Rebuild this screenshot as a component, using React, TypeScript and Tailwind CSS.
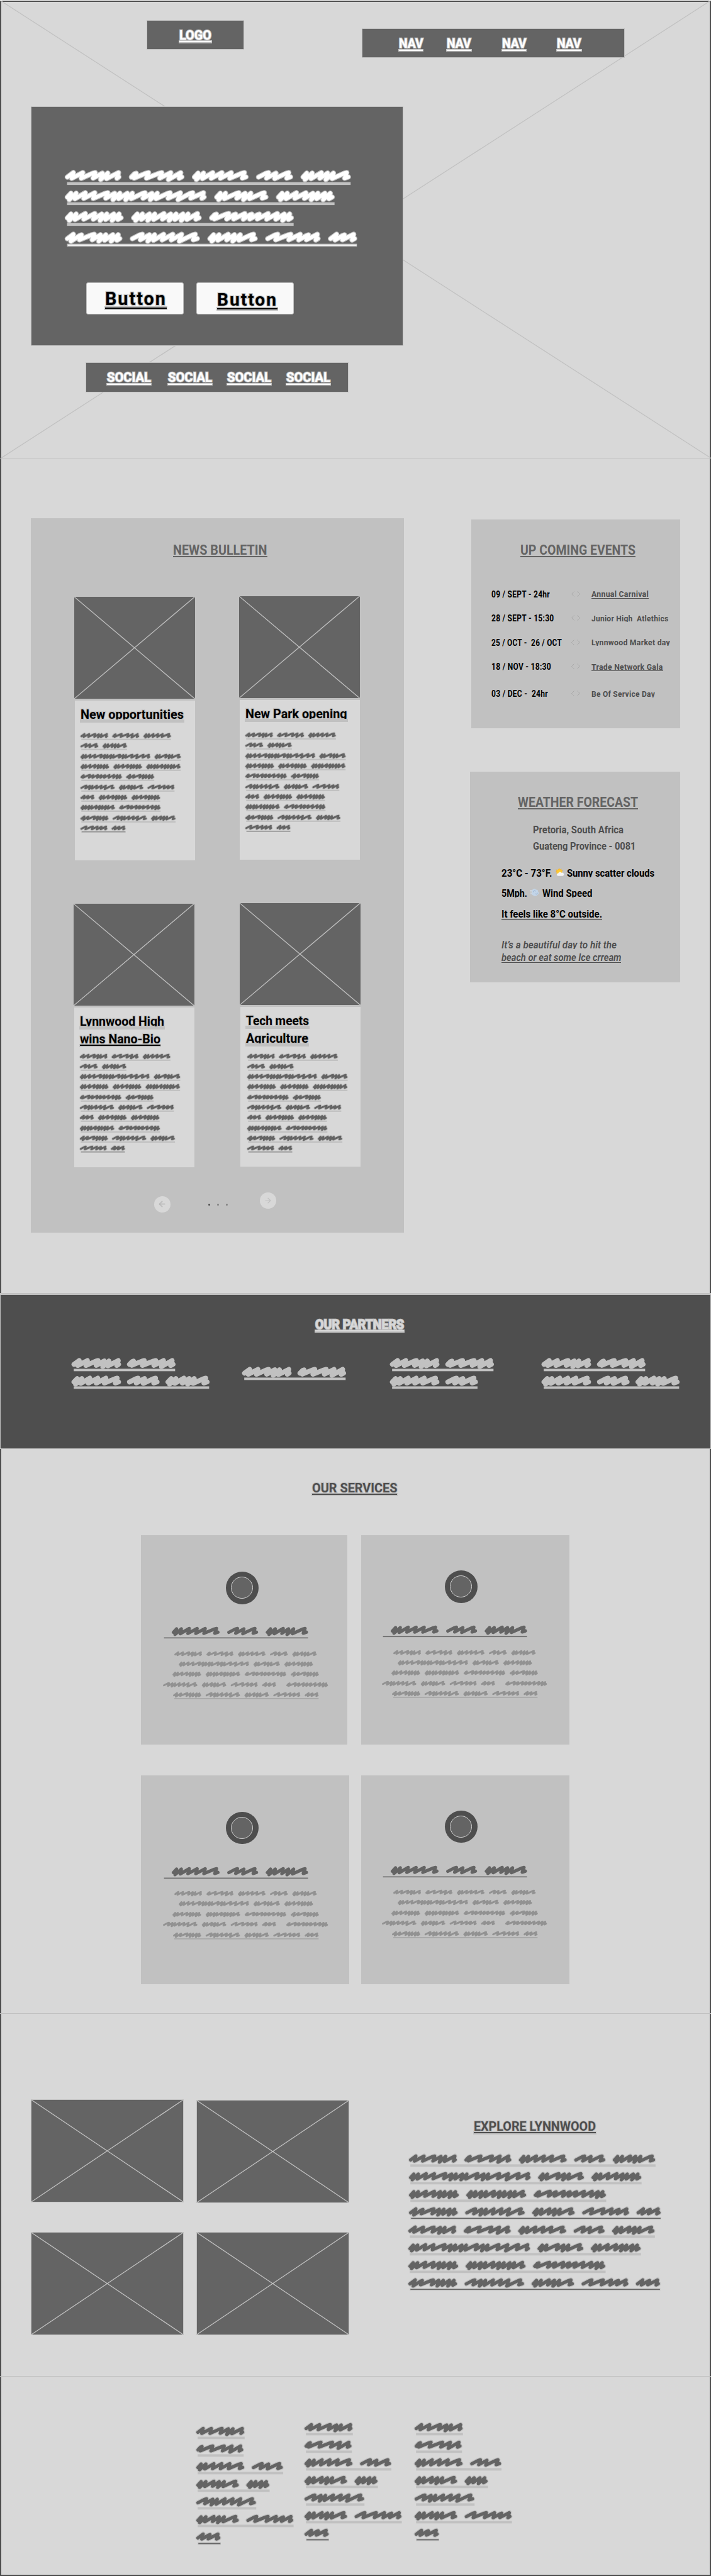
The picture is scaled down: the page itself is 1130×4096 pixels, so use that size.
import { useLayoutEffect, useRef } from "react";
import type { ReactNode } from "react";

/* ---------- scribbled placeholder text ---------- */

type Peak = [kind: "t" | "T" | "s" | "d" | "n" | "c", x: number];
type Word = { w: number; peaks: Peak[] };

const WORDS: Record<string, Word> = {
  a: { w: 350, peaks: [["t", 50], ["t", 110], ["s", 190], ["d", 234], ["n", 268], ["t", 336]] },
  b: { w: 343, peaks: [["c", 42], ["s", 122], ["s", 206], ["T", 261], ["t", 324]] },
  c: { w: 350, peaks: [["d", 35], ["n", 70], ["t", 128], ["t", 186], ["t", 245], ["s", 330]] },
  d: { w: 226, peaks: [["s", 77], ["n", 122], ["s", 205]] },
  e: { w: 310, peaks: [["d", 35], ["n", 70], ["t", 128], ["d", 167], ["n", 204], ["s", 290]] },
  f: {
    w: 890,
    peaks: [
      ["d", 35], ["n", 68], ["t", 126], ["t", 186], ["s", 270], ["d", 312], ["n", 345], ["d", 392],
      ["n", 424], ["s", 506], ["d", 548], ["n", 582], ["s", 665], ["T", 728], ["s", 808], ["t", 874],
    ],
  },
  g: { w: 335, peaks: [["d", 35], ["n", 68], ["s", 154], ["d", 192], ["n", 228], ["s", 315]] },
  h: { w: 364, peaks: [["d", 35], ["n", 68], ["t", 126], ["t", 186], ["d", 230], ["n", 262], ["d", 306], ["n", 340]] },
  i: {
    w: 438,
    peaks: [
      ["d", 35], ["n", 68], ["d", 112], ["n", 146], ["t", 204], ["d", 247], ["n", 281], ["d", 324], ["n", 357], ["t", 416],
    ],
  },
  j: {
    w: 528,
    peaks: [
      ["c", 42], ["s", 122], ["c", 164], ["t", 222], ["c", 266], ["c", 314], ["t", 370], ["t", 428], ["d", 472], ["n", 506],
    ],
  },
  k: { w: 356, peaks: [["T", 50], ["c", 102], ["s", 184], ["d", 222], ["n", 256], ["d", 300], ["n", 334]] },
  l: { w: 435, peaks: [["s", 77], ["d", 120], ["n", 153], ["t", 210], ["t", 268], ["T", 324], ["s", 412]] },
  m: { w: 342, peaks: [["s", 77], ["s", 160], ["t", 218], ["c", 270], ["t", 326]] },
  n: { w: 176, peaks: [["t", 50], ["c", 100], ["t", 158]] },
  o: { w: 167, peaks: [["d", 35], ["n", 69], ["d", 111], ["n", 146]] },
  _: { w: 18, peaks: [] },
};

function wordPath({ w, peaks }: Word, x: number) {
  if (!peaks.length) return "";
  let d = `M${x + 12} 2`;
  for (const [kind, p] of peaks) {
    const q = x + p;
    if (kind === "t") d += `L${q} -26L${q - 10} 10`;
    if (kind === "T") d += `L${q} -26L${q - 15} 18`;
    if (kind === "s") d += `L${q - 18} -22L${q - 2} -26L${q - 15} 9`;
    if (kind === "d") d += `L${q} -23L${q - 11} 18`;
    if (kind === "n") d += `L${q} -23L${q - 8} 12`;
    if (kind === "c") d += `L${q - 10} -19L${q} -22L${q - 13} 9`;
  }
  return d + `L${x + w - 12} 1`;
}

type ScribbleProps = {
  lines: string[];
  /** pixels per drawing unit; one line is 129 units high */
  scale: number;
  color: string;
  outline?: number;
  bands?: boolean;
  rule?: number;
  ruleStart?: number;
  className?: string;
};

function Scribble({ lines, scale, color, outline = 0, bands = true, rule = 5, ruleStart = 10, className = "" }: ScribbleProps) {
  return (
    <div className={`flex flex-col ${className}`}>
      {lines.map((line, row) => {
        let x = 0;
        let path = "";
        for (const key of line) {
          path += wordPath(WORDS[key], x);
          x += WORDS[key].w + 56;
        }
        const width = x - 56;
        const last = row === lines.length - 1;
        return (
          <svg
            key={row}
            className="block shrink-0 overflow-visible"
            width={width * scale}
            height={129 * scale}
            viewBox={`0 -60 ${width} 129`}
            fill="none"
            strokeLinecap="round"
            strokeLinejoin="round"
          >
            {outline > 0 && <path d={path} stroke="#c1c1c1" strokeWidth={24 + outline * 2} />}
            {bands && <rect x={10} y={34} width={width - 7} height={18} fill="#c1c1c1" />}
            <path d={path} stroke={color} strokeWidth={24} />
            {last && rule > 0 && (
              <rect x={ruleStart + 5} y={43 - rule / 2} width={width - ruleStart - 5} height={rule} fill={color} />
            )}
          </svg>
        );
      })}
    </div>
  );
}

/* ---------- text set to a fixed measure ---------- */

type LabelProps = { children: string; className?: string; mark?: "none" | "band" | "line"; halo?: boolean; thick?: boolean };

function Label({ children, className = "", mark = "line", halo = false, thick = false }: LabelProps) {
  const box = useRef<HTMLSpanElement>(null);
  const text = useRef<HTMLSpanElement>(null);

  useLayoutEffect(() => {
    const outer = box.current;
    const inner = text.current;
    if (!outer || !inner) return;
    const fit = () => {
      inner.style.transform = "none";
      const ratio = outer.getBoundingClientRect().width / inner.getBoundingClientRect().width;
      inner.style.transform = `scaleX(${ratio})`;
    };
    fit();
    document.fonts?.ready.then(fit);
  }, [children]);

  return (
    <span ref={box} className={`relative block shrink-0 leading-none font-bold whitespace-pre ${className}`}>
      <span
        ref={text}
        className={`inline-block origin-left align-top ${halo ? "[-webkit-text-stroke:2.4px_#c1c1c1] [paint-order:stroke_fill]" : ""}`}
      >
        {children}
      </span>
      {mark !== "none" && (
        <span className="absolute top-[0.89em] -right-px -left-px flex h-[0.21em] items-center bg-[#c1c1c1] px-px">
          {mark === "line" && <span className={`w-full bg-current ${thick ? "h-[2px]" : "h-px"}`} />}
        </span>
      )}
    </span>
  );
}

function Crossed({ className }: { className: string }) {
  return (
    <div className={`bg-[#646464] ${className}`}>
      <svg className="block h-full w-full" viewBox="0 0 100 100" preserveAspectRatio="none" stroke="#c1c1c1" strokeWidth={1.3}>
        <line x1="0" y1="0" x2="100" y2="100" vectorEffect="non-scaling-stroke" />
        <line x1="0" y1="100" x2="100" y2="0" vectorEffect="non-scaling-stroke" />
      </svg>
    </div>
  );
}

/* ---------- hero ---------- */

function Hero() {
  return (
    <section className="relative h-[728px] border-b border-[#c1c1c1]">
      <svg className="absolute inset-0 h-full w-full" viewBox="0 0 1130 728" stroke="#c1c1c1" strokeWidth={1.3}>
        <line x1="0" y1="0" x2="1130" y2="728" />
        <line x1="0" y1="729" x2="1130" y2="0" />
      </svg>
      <div className="relative">
        <header className="flex items-start pl-[232.5px]">
          <div className="mt-[30.5px] flex h-[47px] w-[155px] justify-center border border-[#c1c1c1] bg-[#646464] pt-[13px] text-[21px] text-white">
            <Label halo thick className="w-[51px]">LOGO</Label>
          </div>
          <nav className="mt-[44px] ml-[187px] flex h-[47px] w-[418.5px] border border-[#c1c1c1] bg-[#646464] pt-[13px] pl-[58px] text-[21px] text-white">
            <Label halo thick className="w-[38.5px]">NAV</Label>
            <Label halo thick className="ml-[38px] w-[38.5px]">NAV</Label>
            <Label halo thick className="ml-[49px] w-[38.5px]">NAV</Label>
            <Label halo thick className="ml-[49px] w-[38.5px]">NAV</Label>
          </nav>
        </header>

        <div className="mt-[76.5px] ml-[49px] h-[381px] w-[591.5px] border border-[#c1c1c1] bg-[#646464] pt-[96px]">
          <Scribble
            className="ml-[54px] gap-[0.3px]"
            scale={0.251}
            color="#ffffff"
            outline={5}
            rule={7}
            lines={["abcde", "fgh", "hij", "klemn"]}
          />
          <div className="mt-[53.5px] ml-[87px] flex gap-5 text-black">
            <div className="h-[51px] w-[155px] rounded-[3px] border border-[#c1c1c1] bg-[#f9f9f9] pt-[11px] pl-[28.5px] text-[29px] tracking-[0.07em]">
              <Label halo thick className="w-[98px]">Button</Label>
            </div>
            <div className="h-[51px] w-[155px] rounded-[3px] border border-[#c1c1c1] bg-[#f9f9f9] pt-[12.5px] pl-[32px] text-[28px] tracking-[0.07em]">
              <Label halo thick className="w-[96px]">Button</Label>
            </div>
          </div>
        </div>

        <div className="mt-[26.5px] ml-[135.5px] flex h-[47.5px] w-[418px] border border-[#c1c1c1] bg-[#646464] pt-[13px] pl-[33px] text-[21px] text-white">
          <Label halo thick className="w-[70px]">SOCIAL</Label>
          <Label halo thick className="ml-[27px] w-[70px]">SOCIAL</Label>
          <Label halo thick className="ml-[24px] w-[70px]">SOCIAL</Label>
          <Label halo thick className="ml-[24px] w-[70px]">SOCIAL</Label>
        </div>
      </div>
    </section>
  );
}

/* ---------- news, events, weather ---------- */

const ARTICLE = ["abc", "de", "fg", "hhi", "jk", "lem", "nhh", "ij", "kle", "mn"];

function Card({ title, children, className = "" }: { title: ReactNode; children?: ReactNode; className?: string }) {
  return (
    <article className={`w-[191.5px] ${className}`}>
      <Crossed className="h-[162px] rounded-[1px]" />
      <div className="mt-[3px] ml-px h-[254px] w-[191px] bg-[#d8d8d8] pt-[12px] pl-[9px] text-[20.5px] text-black">
        {title}
        {children}
      </div>
    </article>
  );
}

function Article({ className }: { className: string }) {
  return (
    <Scribble className={`gap-[0.3px] ${className}`} scale={0.1243} color="#646464" outline={9} rule={6} lines={ARTICLE} />
  );
}

function News() {
  return (
    <div className="mt-[95px] ml-[49px] h-[1136px] w-[593px] bg-[#c1c1c1] pt-[40px]">
      <Label thick className="ml-[226px] w-[149.5px] text-[21.5px] text-[#646464]">NEWS BULLETIN</Label>
      <div className="mt-[63.5px] ml-[69px] flex gap-[70.5px]">
        <Card title={<Label halo mark="band" className="w-[164px]">New opportunities</Label>}>
          <Article className="mt-[16.5px]" />
        </Card>
        <Card className="-mt-px" title={<Label halo mark="band" className="w-[161.5px]">New Park opening</Label>}>
          <Article className="mt-[16.5px]" />
        </Card>
      </div>
      <div className="mt-[69px] ml-[68px] flex gap-[72.5px]">
        <Card
          title={
            <>
              <Label halo mark="band" className="w-[134px]">Lynnwood High</Label>
              <Label halo thick className="mt-[7.5px] w-[128px]">wins Nano-Bio</Label>
            </>
          }
        >
          <Article className="mt-[10px]" />
        </Card>
        <Card
          className="-mt-px"
          title={
            <>
              <Label halo mark="band" className="w-[100px]">Tech meets</Label>
              <Label halo mark="band" className="mt-[7.5px] w-[99px]">Agriculture</Label>
            </>
          }
        >
          <Article className="mt-[11px] ml-[2px]" />
        </Card>
      </div>
      <div className="mt-[46px] ml-[196px] flex items-start">
        <div className="grid size-[25.5px] place-items-center rounded-full bg-[#d8d8d8]">
          <svg width="11" height="11" viewBox="0 0 11 11" fill="none" stroke="#c1c1c1" strokeWidth="2.2" strokeLinecap="round" strokeLinejoin="round">
            <path d="M9.5 5.5H1.5M5.5 1.5L1.5 5.5L5.5 9.5" />
            <circle cx="2" cy="5.5" r="0.5" fill="#646464" stroke="none" />
          </svg>
        </div>
        <div className="mt-[11.5px] ml-[60.5px] flex gap-[11px]">
          <span className="size-[3px] rounded-full bg-[#4e4e4e]" />
          <span className="size-[3px] rounded-full bg-[#808080]" />
          <span className="size-[3px] rounded-full bg-[#808080]" />
        </div>
        <div className="-mt-[6px] ml-[51px] grid size-[25.5px] place-items-center rounded-full bg-[#d8d8d8]">
          <svg width="10" height="10" viewBox="0 0 10 10" fill="none" stroke="#c1c1c1" strokeWidth="1.2" strokeLinecap="round" strokeLinejoin="round">
            <path d="M1 5H9M5 1.2L9 5L5 8.8" />
          </svg>
        </div>
      </div>
    </div>
  );
}

function EventRow({ className = "", date, name }: { className?: string; date: ReactNode; name: ReactNode }) {
  return (
    <li className={`grid h-[14px] grid-cols-[127px_32px_1fr] tracking-[0.02em] ${className}`}>
      <span className="text-[14px] text-black">{date}</span>
      <svg className="mt-px" width="14" height="11" viewBox="0 0 14 11" fill="none" stroke="#999999" strokeWidth="0.6">
        <path d="M4.5 1.5L0.5 5.5L4.5 9.5M9.5 1.5L13.5 5.5L9.5 9.5" />
      </svg>
      <span className="pt-[0.5px] text-[13.5px] text-[#4e4e4e]">{name}</span>
    </li>
  );
}

function Events() {
  return (
    <div className="mt-[97px] h-[332px] w-[331.5px] bg-[#c1c1c1] pt-[38px]">
      <Label thick className="ml-[78px] w-[183px] text-[21.5px] text-[#646464]">UP COMING EVENTS</Label>
      <ul className="mt-[52px] ml-[32px]">
        <EventRow
          date={<Label mark="none" className="w-[93px]">09 / SEPT - 24hr</Label>}
          name={<Label className="w-[91px]">Annual Carnival</Label>}
        />
        <EventRow
          className="mt-[24.5px]"
          date={<Label mark="none" className="w-[99.5px]">28 / SEPT - 15:30</Label>}
          name={<Label mark="band" className="w-[122.5px]">Junior High  Atlethics</Label>}
        />
        <EventRow
          className="mt-[24.5px]"
          date={<Label mark="none" className="w-[112px]">25 / OCT -  26 / OCT</Label>}
          name={<Label mark="band" className="w-[125px]">Lynnwood Market day</Label>}
        />
        <EventRow
          className="mt-[24.5px]"
          date={<Label mark="none" className="w-[95px]">18 / NOV - 18:30</Label>}
          name={<Label className="w-[113.5px]">Trade Network Gala</Label>}
        />
        <EventRow
          className="mt-[29px]"
          date={<Label mark="none" className="w-[90px]">03 / DEC -  24hr</Label>}
          name={<Label mark="band" className="w-[101px]">Be Of Service Day</Label>}
        />
      </ul>
    </div>
  );
}

function SunCloud() {
  return (
    <svg className="mx-[4.5px] shrink-0" width="15" height="15" viewBox="0 0 15 15">
      <path d="M7 0.5L8 2.6L10.4 1.3L10.2 3.8L13 4L11 6L12 9H2L3 7.4L0.3 6.6L2.6 5L1.3 2.6L4.4 3Z" fill="#f9b62b" />
      <circle cx="7" cy="6.4" r="4" fill="#fdca35" />
      <path d="M5 12.8a2.2 2.2 0 0 1 0.3-4.4a3 3 0 0 1 5.2-0.6a2.6 2.6 0 0 1 1.9 5Z" fill="#f3f3f3" />
    </svg>
  );
}

function WindPuff() {
  return (
    <svg className="mx-[4.5px] shrink-0" width="15" height="15" viewBox="0 0 15 15">
      <path d="M0.5 3.6H4M0.8 6.2H4M1.5 9H4" stroke="#dbe6f0" strokeWidth="1" strokeLinecap="round" />
      <path d="M5 11.6a2.7 2.7 0 0 1-1-4.8a3.6 3.6 0 0 1 5.8-4.2a3.2 3.2 0 0 1 3.4 3.2a2.8 2.8 0 0 1-1 5a3.2 3.2 0 0 1-3.6 1.8a3.8 3.8 0 0 1-3.6-1Z" fill="#c3d5e8" />
      <path d="M5.6 6.2a2 2 0 0 1 3.6-1.2M9 9a1.6 1.6 0 0 0 3-1" fill="none" stroke="#8fa9c9" strokeWidth="0.9" strokeLinecap="round" />
    </svg>
  );
}

function Weather() {
  return (
    <div className="mt-[69px] -ml-[2.5px] h-[335px] w-[334px] bg-[#c1c1c1] pt-[37.5px]">
      <Label thick className="ml-[76px] w-[191px] text-[21.5px] text-[#646464]">WEATHER FORECAST</Label>
      <div className="mt-[26px] ml-[100px] flex flex-col gap-[9.5px] text-[16.5px] text-[#4e4e4e]">
        <Label mark="band" className="w-[144px]">Pretoria, South Africa</Label>
        <Label mark="band" className="w-[163.5px]">Guateng Province - 0081</Label>
      </div>
      <div className="mt-[25px] ml-[50px] flex flex-col text-[17px] text-black">
        <div className="flex">
          <Label mark="none" className="w-[80.5px]">23°C - 73°F.</Label>
          <SunCloud />
          <Label mark="band" className="w-[139px]">Sunny scatter clouds</Label>
        </div>
        <div className="mt-[15px] flex">
          <Label mark="band" className="w-[41px]">5Mph.</Label>
          <WindPuff />
          <Label mark="band" className="w-[79.5px]">Wind Speed</Label>
        </div>
        <Label className="mt-[16px] w-[160px]">It feels like 8°C outside.</Label>
      </div>
      <div className="mt-[33px] ml-[50px] flex flex-col gap-[4.5px] text-[16px] text-[#4e4e4e] italic">
        <Label mark="band" className="w-[183px] !font-semibold">It’s a beautiful day to hit the</Label>
        <Label className="w-[190.5px] !font-semibold">beach or eat some Ice crream</Label>
      </div>
    </div>
  );
}

/* ---------- partners ---------- */

function Partners() {
  return (
    <section className="h-[248px] border-x border-t-[3px] border-b-[1.5px] border-[#c1c1c1] bg-[#4e4e4e] pt-[36.5px]">
      <Label halo thick className="ml-[499.5px] w-[141px] text-[21px] text-[#d8d8d8]">OUR PARTNERS</Label>
      <div className="mt-[39px] ml-[114px] flex items-start">
        <Scribble className="w-[270.5px]" scale={0.2172} color="#c1c1c1" outline={6} rule={0} lines={["ab", "cde"]} />
        <Scribble className="mt-[14.5px] w-[235.5px]" scale={0.2172} color="#c1c1c1" outline={6} rule={0} lines={["ab"]} />
        <Scribble className="w-[241px]" scale={0.2172} color="#c1c1c1" outline={6} rule={0} lines={["ab", "cd"]} />
        <Scribble scale={0.2172} color="#c1c1c1" outline={6} rule={0} lines={["ab", "cde"]} />
      </div>
    </section>
  );
}

/* ---------- services ---------- */

function Service({ className = "", inner = "" }: { className?: string; inner?: string }) {
  return (
    <div className={`h-[332.5px] bg-[#c1c1c1] pt-[58px] ${className}`}>
      <div className={inner}>
        <div className="ml-[135px] grid size-[51.5px] place-items-center rounded-full bg-[#4e4e4e]">
          <div className="size-[35px] rounded-full border-[1.5px] border-[#d0d0d0] bg-[#646464]" />
        </div>
        <Scribble
          className="mt-[31.5px] ml-[49px]"
          scale={0.2171}
          color="#646464"
          bands={false}
          rule={7}
          ruleStart={-62}
          lines={["cde"]}
        />
        <Scribble
          className="mt-[12.5px] w-[333px] items-center gap-[0.2px]"
          scale={0.1256}
          color="#929292"
          bands={false}
          rule={7}
          lines={["abcde", "fgh", "hijk", "lemn_j", "klemn"]}
        />
      </div>
    </div>
  );
}

function Services() {
  return (
    <section className="h-[898px] border-b border-[#c1c1c1] pt-[51.5px]">
      <Label halo thick className="ml-[495.5px] w-[135.5px] text-[21px] text-[#4e4e4e]">OUR SERVICES</Label>
      <div className="mt-[64.5px] ml-[224px] grid grid-cols-[330.5px_330.5px] gap-x-[19.5px] gap-y-[49px]">
        <Service className="w-[327.5px]" />
        <Service inner="-mt-[2px] -ml-[2px]" />
        <Service />
        <Service inner="-mt-[2px] -ml-[2px]" />
      </div>
    </section>
  );
}

/* ---------- explore ---------- */

function Explore() {
  const lines = ["abcde", "fgh", "hij", "klemn"];
  const tile = "h-[164px] w-[243px] border border-[#c1c1c1]";
  return (
    <section className="flex h-[577px] items-start border-b border-[#c1c1c1]">
      <div className="mt-[135.5px] ml-[49px] grid grid-cols-2 gap-x-[19.5px] gap-y-[47.5px]">
        <Crossed className={tile} />
        <Crossed className={`${tile} mt-px -mb-px`} />
        <Crossed className={tile} />
        <Crossed className={tile} />
      </div>
      <div className="mt-[169px] ml-[95px]">
        <Label halo thick className="ml-[103px] w-[194px] text-[20.5px] text-[#4e4e4e]">EXPLORE LYNNWOOD</Label>
        <Scribble className="mt-[29.5px]" scale={0.217} color="#646464" outline={6} rule={6} lines={lines} />
        <Scribble className="mt-[1.5px] -ml-px" scale={0.217} color="#646464" outline={6} rule={6} lines={lines} />
      </div>
    </section>
  );
}

/* ---------- footer ---------- */

function Footer() {
  const lines = ["a", "b", "cd", "eo", "l", "em", "n"];
  return (
    <footer className="flex h-[317px] items-start pl-[312px]">
      <Scribble className="mt-[75px] w-[172px]" scale={0.2175} color="#646464" outline={6} rule={8} lines={lines} />
      <Scribble className="mt-[69px] w-[175px]" scale={0.2175} color="#646464" outline={6} rule={8} lines={lines} />
      <Scribble className="mt-[69px]" scale={0.2175} color="#646464" outline={6} rule={8} lines={lines} />
    </footer>
  );
}

export default function App() {
  return (
    <div className="w-[1130px] overflow-hidden bg-white pt-px font-['Roboto','Liberation_Sans',sans-serif]">
      <main className="h-[4095px] bg-[#d8d8d8] shadow-[inset_0_0_0_2px_#4e4e4e]">
        <Hero />
        <section className="flex h-[1327px] items-start">
          <News />
          <div className="ml-[107px]">
            <Events />
            <Weather />
          </div>
        </section>
        <Partners />
        <Services />
        <Explore />
        <Footer />
      </main>
    </div>
  );
}
